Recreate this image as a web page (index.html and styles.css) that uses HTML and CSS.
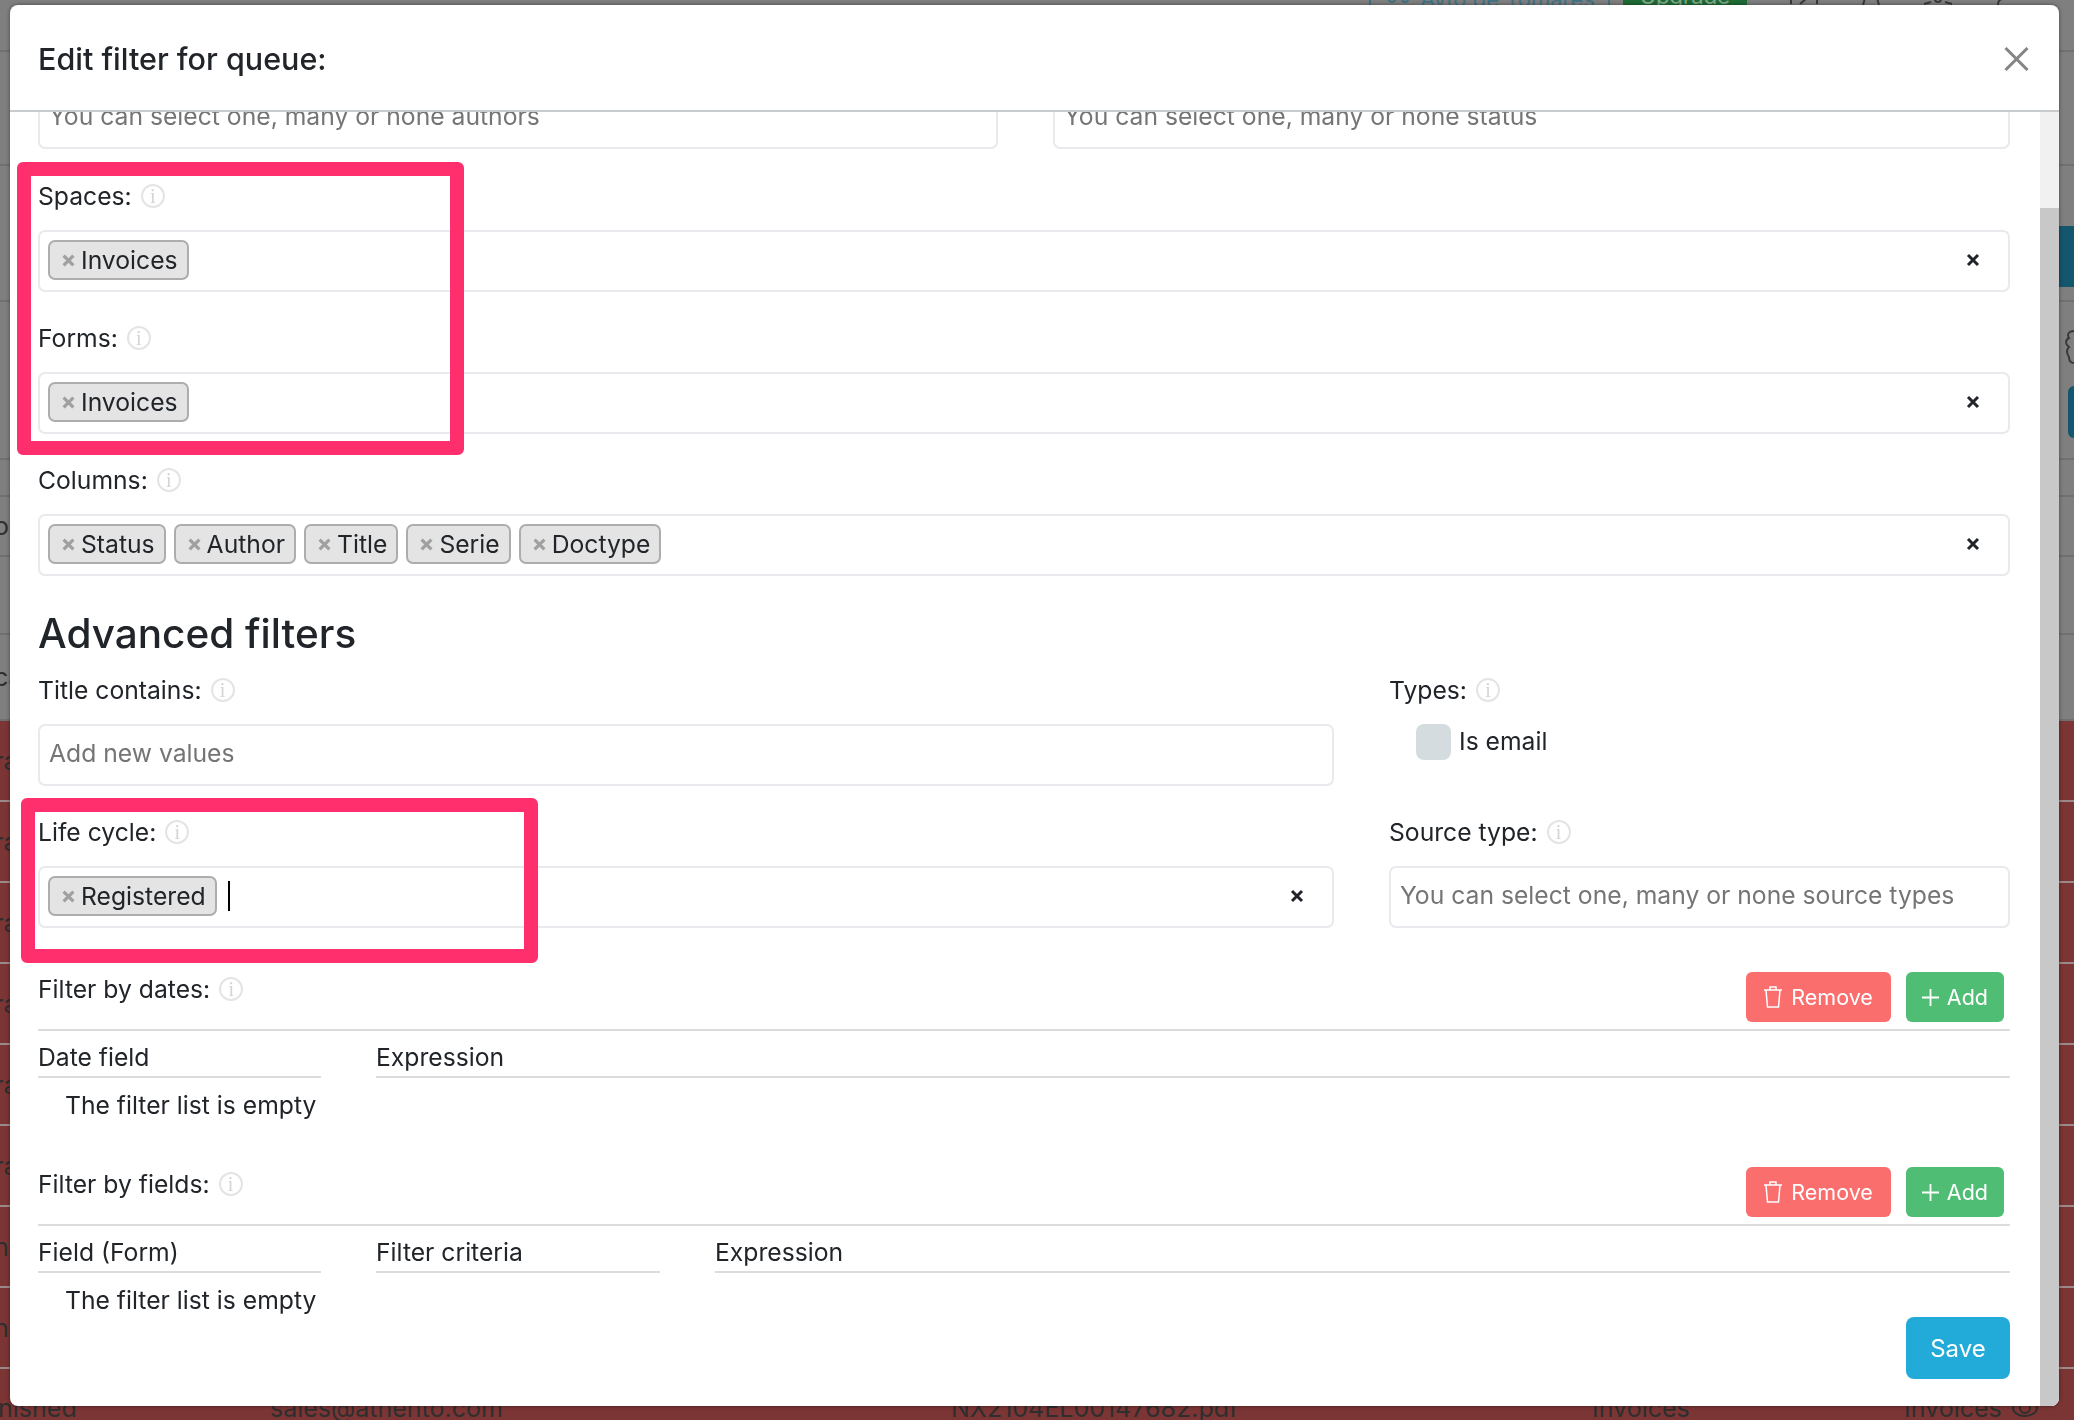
FILE: index.html
```html
<!DOCTYPE html>
<html lang="en">
<head>
    <meta charset="UTF-8">
    <title>Edit filter for queue</title>
    <link rel="stylesheet" href="styles.css">
</head>
<body>
    <div class="page">
        <div class="topbar">
            <span class="top-sep"></span>
            <svg class="top-icon" width="26" height="7" viewBox="0 0 26 7"><circle cx="6" cy="1" r="3" fill="none" stroke="#3f7385" stroke-width="2"/><circle cx="19" cy="1" r="3" fill="none" stroke="#3f7385" stroke-width="2"/></svg>
            <span class="top-link">Avto de Tomares</span>
            <span class="top-sep"></span>
            <span class="upgrade">Upgrade</span>
            <svg class="top-glyph" width="30" height="7" viewBox="0 0 30 7"><path d="M2 0v6M28 0v6M11 6l7-6" fill="none" stroke="#3a3a3a" stroke-width="2"/></svg>
            <svg class="top-glyph" width="20" height="7" viewBox="0 0 20 7"><path d="M2 7l2-7M18 7l-2-7" fill="none" stroke="#3a3a3a" stroke-width="2"/></svg>
            <svg class="top-glyph" width="30" height="7" viewBox="0 0 30 7"><circle cx="15" cy="1" r="3" fill="none" stroke="#3a3a3a" stroke-width="2"/><path d="M1 6l7-2M29 6l-7-2" fill="none" stroke="#3a3a3a" stroke-width="2"/></svg>
            <svg class="top-glyph" width="16" height="7" viewBox="0 0 16 7"><path d="M8 1c-4 0-5 2-5 6" fill="none" stroke="#3a3a3a" stroke-width="2"/></svg>
        </div>
        <div class="dim-rows">
            <div class="dim-row"></div>
            <div class="dim-row"></div>
            <div class="dim-row dim-row-teal"><span class="teal-bar"></span></div>
            <div class="dim-row dim-row-side">
                <svg width="10" height="38" viewBox="0 0 10 38"><path d="M10 3C4 3 3 7 5 10c-4 2-4 6 0 9-3 3-2 7 0 10 0 4 2 6 5 6" fill="none" stroke="#3a3a3a" stroke-width="2"/></svg>
                <span class="teal-btn"></span>
            </div>
            <div class="dim-row"></div>
            <div class="dim-row"><span class="cut-text">o</span></div>
            <div class="dim-row"></div>
            <div class="dim-row"><span class="cut-text">ca</span></div>
        </div>
        <div class="red-row"><span class="cut-text">ra</span></div>
        <div class="red-row"><span class="cut-text">ra</span></div>
        <div class="red-row"><span class="cut-text">ra</span></div>
        <div class="red-row"><span class="cut-text">ra</span></div>
        <div class="red-row"><span class="cut-text">ra</span></div>
        <div class="red-row"><span class="cut-text">ra</span></div>
        <div class="red-row"><span class="cut-text">n</span></div>
        <div class="red-row"><span class="cut-text">n</span></div>
        <div class="last-row">
            <span class="cut-last">nished</span>
            <span>sales@athento.com</span>
            <span>NX2104EL00147682.pdf</span>
            <span>Invoices</span>
            <span class="with-eye">Invoices
                <svg width="26" height="26" viewBox="0 0 26 26"><ellipse cx="13" cy="13" rx="12" ry="8" fill="none" stroke="#2e2e2e" stroke-width="2"/><circle cx="13" cy="13" r="5" fill="none" stroke="#2e2e2e" stroke-width="2"/></svg>
            </span>
        </div>
    </div>

    <div class="modal">
        <div class="modal-header">
            <h4 class="modal-title">Edit filter for queue:</h4>
            <svg class="modal-close" width="25" height="24" viewBox="0 0 25 24"><path d="M1.5 1l22 22M23.5 1l-22 22" fill="none" stroke="#858585" stroke-width="3"/></svg>
        </div>
        <div class="modal-main">
            <div class="modal-body">
                <div class="row-half row-scrolled">
                    <div class="box"><span class="placeholder">You can select one, many or none authors</span></div>
                    <div class="box"><span class="placeholder">You can select one, many or none status</span></div>
                </div>

                <div class="field">
                    <div class="field-label">Spaces: <span class="info">i</span></div>
                    <div class="box box-tags">
                        <span class="chip"><svg class="chip-x" width="13" height="13" viewBox="0 0 12 12"><path d="M1.5 1.5l9 9M10.5 1.5l-9 9"/></svg>Invoices</span>
                        <svg class="clear-x" width="14" height="14" viewBox="0 0 14 14"><path d="M2 2l10 10M12 2L2 12"/></svg>
                    </div>
                </div>
                <div class="field">
                    <div class="field-label">Forms: <span class="info">i</span></div>
                    <div class="box box-tags">
                        <span class="chip"><svg class="chip-x" width="13" height="13" viewBox="0 0 12 12"><path d="M1.5 1.5l9 9M10.5 1.5l-9 9"/></svg>Invoices</span>
                        <svg class="clear-x" width="14" height="14" viewBox="0 0 14 14"><path d="M2 2l10 10M12 2L2 12"/></svg>
                    </div>
                </div>
                <div class="field">
                    <div class="field-label">Columns: <span class="info">i</span></div>
                    <div class="box box-tags">
                        <span class="chip"><svg class="chip-x" width="13" height="13" viewBox="0 0 12 12"><path d="M1.5 1.5l9 9M10.5 1.5l-9 9"/></svg>Status</span>
                        <span class="chip"><svg class="chip-x" width="13" height="13" viewBox="0 0 12 12"><path d="M1.5 1.5l9 9M10.5 1.5l-9 9"/></svg>Author</span>
                        <span class="chip"><svg class="chip-x" width="13" height="13" viewBox="0 0 12 12"><path d="M1.5 1.5l9 9M10.5 1.5l-9 9"/></svg>Title</span>
                        <span class="chip"><svg class="chip-x" width="13" height="13" viewBox="0 0 12 12"><path d="M1.5 1.5l9 9M10.5 1.5l-9 9"/></svg>Serie</span>
                        <span class="chip"><svg class="chip-x" width="13" height="13" viewBox="0 0 12 12"><path d="M1.5 1.5l9 9M10.5 1.5l-9 9"/></svg>Doctype</span>
                        <svg class="clear-x" width="14" height="14" viewBox="0 0 14 14"><path d="M2 2l10 10M12 2L2 12"/></svg>
                    </div>
                </div>

                <h2 class="section-title">Advanced filters</h2>

                <div class="row-wide">
                    <div class="field">
                        <div class="field-label">Title contains: <span class="info">i</span></div>
                        <div class="box"><span class="placeholder">Add new values</span></div>
                    </div>
                    <div class="field">
                        <div class="field-label">Types: <span class="info">i</span></div>
                        <div class="check-row"><span class="switch"></span>Is email</div>
                    </div>
                    <div class="field">
                        <div class="field-label">Life cycle: <span class="info">i</span></div>
                        <div class="box box-tags">
                            <span class="chip"><svg class="chip-x" width="13" height="13" viewBox="0 0 12 12"><path d="M1.5 1.5l9 9M10.5 1.5l-9 9"/></svg>Registered</span>
                            <span class="caret"></span>
                            <svg class="clear-x" width="14" height="14" viewBox="0 0 14 14"><path d="M2 2l10 10M12 2L2 12"/></svg>
                        </div>
                    </div>
                    <div class="field">
                        <div class="field-label">Source type: <span class="info">i</span></div>
                        <div class="box"><span class="placeholder">You can select one, many or none source types</span></div>
                    </div>
                </div>

                <div class="filter-head">
                    <div class="field-label">Filter by dates: <span class="info">i</span></div>
                    <div class="filter-btns">
                        <button class="btn btn-remove"><svg width="20" height="24" viewBox="0 0 20 24"><path d="M1 5h18M7 5V2h6v3M3 5l1.500 17h11L17 5" fill="none" stroke="#fff" stroke-width="1.500"/></svg>Remove</button>
                        <button class="btn btn-add"><svg width="17" height="17" viewBox="0 0 17 17"><path d="M8.500 0v17M0 8.500h17" fill="none" stroke="#fff" stroke-width="1.800"/></svg>Add</button>
                    </div>
                </div>
                <div class="filter-cols cols-two">
                    <div class="col-head">Date field</div>
                    <div class="col-head">Expression</div>
                </div>
                <div class="empty">The filter list is empty</div>

                <div class="filter-head filter-head-next">
                    <div class="field-label">Filter by fields: <span class="info">i</span></div>
                    <div class="filter-btns">
                        <button class="btn btn-remove"><svg width="20" height="24" viewBox="0 0 20 24"><path d="M1 5h18M7 5V2h6v3M3 5l1.500 17h11L17 5" fill="none" stroke="#fff" stroke-width="1.500"/></svg>Remove</button>
                        <button class="btn btn-add"><svg width="17" height="17" viewBox="0 0 17 17"><path d="M8.500 0v17M0 8.500h17" fill="none" stroke="#fff" stroke-width="1.800"/></svg>Add</button>
                    </div>
                </div>
                <div class="filter-cols cols-three">
                    <div class="col-head">Field (Form)</div>
                    <div class="col-head">Filter criteria</div>
                    <div class="col-head">Expression</div>
                </div>
                <div class="empty">The filter list is empty</div>

                <div class="save-row"><button class="btn-save">Save</button></div>
            </div>
            <div class="scrollbar"><div class="scroll-thumb"></div></div>
        </div>
        <div class="mark mark-top"></div>
        <div class="mark mark-life"></div>
    </div>
</body>
</html>
```

FILE: styles.css
```css
* {
    box-sizing: border-box;
}
html, body {
    height: 100%;
}
body {
    margin: 0;
    overflow: hidden;
    font-family: 'Inter', 'Liberation Sans', sans-serif;
    font-size: 24.7px;
    color: #212529;
    background-color: #7f7f7f;
}

/* page behind the dialog, already dimmed */
.page {
    height: 1420px;
    overflow: hidden;
    color: #2e2e2e;
    font-size: 25px;
}
.topbar {
    height: 5px;
    display: flex;
    align-items: flex-end;
    padding-left: 1369px;
    white-space: nowrap;
}
.top-sep {
    width: 2px;
    height: 7px;
    background-color: #3f7385;
}
.top-icon {
    margin-left: 15px;
}
.top-link {
    margin-left: 8px;
    margin-right: 13px;
    color: #3f7385;
    font-size: 22px;
    line-height: 20px;
    margin-bottom: -4px;
}
.upgrade {
    width: 124px;
    margin-left: 13px;
    text-align: center;
    background-color: #1f6b35;
    color: #7fa98a;
    font-size: 22px;
    line-height: 20px;
    margin-bottom: -1px;
}
.top-glyph {
    margin-left: 42px;
}
.dim-rows {
    height: 716px;
    display: grid;
    grid-template-rows: 47px 114px 136px 158px 37px 60px 78px 86px;
}
.dim-row {
    border-bottom: 2px solid #707070;
    display: flex;
    align-items: center;
    background-color: #7f7f7f;
}
.dim-row-teal {
    justify-content: flex-end;
    align-items: flex-end;
    padding-bottom: 13px;
}
.teal-bar {
    width: 20px;
    height: 61px;
    background-color: #15566f;
}
.dim-row-side {
    flex-direction: column;
    align-items: flex-end;
    justify-content: flex-start;
    padding-top: 26px;
    gap: 20px;
}
.teal-btn {
    width: 6px;
    height: 52px;
    background-color: #15566f;
    border-radius: 6px 0 0 6px;
}
.cut-text {
    margin-left: -6px;
}
.red-row {
    height: 81px;
    display: flex;
    align-items: center;
    background-color: #7c3535;
    border-bottom: 2px solid #9c8a8a;
}
.last-row {
    height: 90px;
    display: grid;
    grid-template-columns: 270px 681px 641px 312px 1fr;
    align-items: start;
    padding-top: 24px;
    background-color: #7c3535;
}
.cut-last {
    margin-left: -2px;
}
.with-eye {
    display: flex;
    align-items: center;
    gap: 10px;
}

/* dialog */
.modal {
    position: fixed;
    left: 10px;
    top: 5px;
    width: 2049px;
    height: 1401px;
    display: flex;
    flex-direction: column;
    background-color: #ffffff;
    border-radius: 8px;
    overflow: hidden;
    box-shadow: 0 0 4px rgba(0, 0, 0, 0.45);
}
.modal-header {
    height: 107px;
    flex-shrink: 0;
    display: flex;
    align-items: center;
    justify-content: space-between;
    padding: 2px 30px 0 28px;
    border-bottom: 2px solid #c7cbce;
}
.modal-title {
    margin: 0;
    font-size: 30.5px;
    font-weight: 500;
}
.modal-main {
    flex: 1;
    min-height: 0;
    display: flex;
}
.modal-body {
    flex: 1;
    min-width: 0;
    overflow: hidden;
    padding: 0 30px 0 28px;
}
.scrollbar {
    width: 19px;
    background-color: #f1f1f1;
    padding-top: 96px;
}
.scroll-thumb {
    height: 100%;
    background-color: #c8c8c8;
}

.row-half {
    display: grid;
    grid-template-columns: 960px 1fr;
    column-gap: 55px;
}
.row-scrolled {
    margin-top: -25px;
    margin-bottom: 30px;
}
.row-wide {
    display: grid;
    grid-template-columns: 1296px 1fr;
    column-gap: 55px;
}
.field {
    margin-bottom: 29px;
}
.field-label {
    height: 34px;
    margin-bottom: 17px;
    display: flex;
    align-items: center;
    gap: 9px;
}
.info {
    width: 24px;
    height: 24px;
    border: 2px solid #e4e4e4;
    border-radius: 50%;
    display: inline-flex;
    align-items: center;
    justify-content: center;
    font-family: 'Liberation Serif', serif;
    font-size: 20px;
    color: #d4d4d4;
}
.box {
    height: 62px;
    border: 2px solid #e9e9ee;
    border-radius: 7px;
    background-color: #ffffff;
    display: flex;
    align-items: center;
    padding: 0 9px 4px;
}
.box-tags {
    gap: 8px;
    padding: 0 28px 2px 8px;
}
.placeholder {
    color: #757575;
    white-space: nowrap;
}
.chip {
    height: 40px;
    display: inline-flex;
    align-items: center;
    gap: 6px;
    padding: 0 9px 0 12px;
    border: 2px solid #adadad;
    border-radius: 7px;
    background-color: #e4e4e4;
}
.chip-x {
    fill: none;
    stroke: #a0a0a0;
    stroke-width: 3;
    flex-shrink: 0;
}
.clear-x {
    margin-left: auto;
    fill: none;
    stroke: #212529;
    stroke-width: 3;
}
.caret {
    width: 2px;
    height: 30px;
    margin-left: 3px;
    background-color: #000000;
}
.section-title {
    margin: 0 0 11px;
    height: 57px;
    line-height: 58px;
    font-size: 40.5px;
    font-weight: 500;
}
.check-row {
    height: 62px;
    display: flex;
    align-items: flex-start;
    gap: 8px;
    padding-left: 27px;
    line-height: 34px;
}
.switch {
    width: 35px;
    height: 36px;
    border-radius: 8px;
    background-color: #d5dcdf;
}
.filter-head {
    display: flex;
    justify-content: space-between;
    align-items: flex-start;
    margin-top: 15px;
    padding-bottom: 7px;
    border-bottom: 2px solid #dcdcdc;
}
.filter-head-next {
    margin-top: 45px;
}
.filter-head .field-label {
    margin-bottom: 0;
}
.filter-btns {
    display: flex;
    gap: 15px;
    padding-right: 6px;
}
.btn {
    height: 50px;
    display: flex;
    align-items: center;
    gap: 8px;
    padding: 0 16px;
    border: none;
    border-radius: 6px;
    color: #ffffff;
    font-family: inherit;
    font-size: 21.5px;
}
.btn-remove {
    padding: 0 18px 0 17px;
    background-color: #fb6e6e;
}
.btn-add {
    background-color: #50bd75;
}
.filter-cols {
    display: grid;
    column-gap: 55px;
}
.cols-two {
    grid-template-columns: 283px 1fr;
}
.cols-three {
    grid-template-columns: 283px 284px 1fr;
}
.col-head {
    height: 47px;
    padding-top: 10px;
    line-height: 33px;
    border-bottom: 2px solid #dcdcdc;
}
.empty {
    margin-top: 11px;
    padding-left: 27px;
    line-height: 33px;
}
.save-row {
    display: flex;
    justify-content: flex-end;
}
.btn-save {
    width: 104px;
    height: 62px;
    border: none;
    border-radius: 8px;
    background-color: #22aad8;
    color: #ffffff;
    font-family: inherit;
    font-size: 24px;
}

/* pink annotation frames drawn over the form */
.mark {
    position: absolute;
    border: 14px solid #ff2f6d;
    border-radius: 6px;
    pointer-events: none;
}
.mark-top {
    left: 7px;
    top: 157px;
    width: 447px;
    height: 293px;
}
.mark-life {
    left: 11px;
    top: 793px;
    width: 517px;
    height: 165px;
}
```
